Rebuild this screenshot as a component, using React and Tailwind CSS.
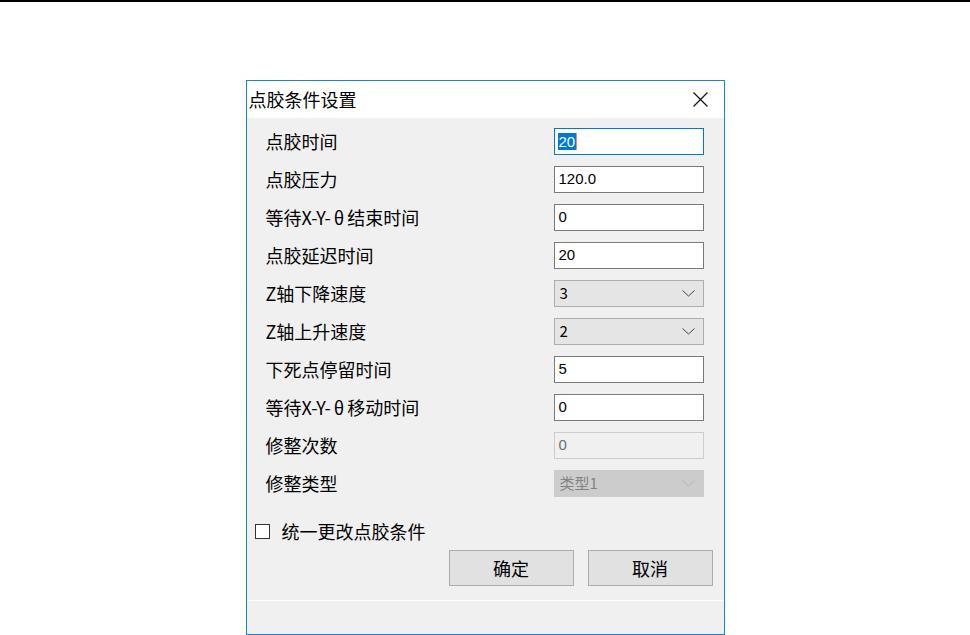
const cjk = { fontFamily: '"Noto Sans CJK SC", "Noto Sans", sans-serif' }

function Chevron({ muted }) {
  return (
    <svg width="13" height="7" viewBox="0 0 13 7" className="shrink-0">
      <polyline
        points="0.5,0.5 6.5,6 12.5,0.5"
        fill="none"
        stroke={muted ? '#b4b4b4' : '#444'}
        strokeWidth="1"
      />
    </svg>
  )
}

function CloseIcon() {
  return (
    <svg width="15" height="15" viewBox="0 0 15 15">
      <path d="M0.5 0.5 L14.5 14.5 M14.5 0.5 L0.5 14.5" stroke="#111" strokeWidth="1.2" fill="none" />
    </svg>
  )
}

function TextField({ value, focused, disabled }) {
  if (disabled) {
    return (
      <div className="h-[27px] w-[150px] border border-[#cccccc] bg-[#f0f0f0] flex items-center px-[4px] text-[15px] text-[#6d6d6d] font-['Liberation_Sans',sans-serif]">
        {value}
      </div>
    )
  }
  return (
    <div
      className={`h-[27px] w-[150px] border bg-white flex items-center px-[3px] text-[15px] text-black font-['Liberation_Sans',sans-serif] ${
        focused ? 'border-[#0078d7]' : 'border-[#7a7a7a]'
      }`}
    >
      {focused ? (
        <>
          <span className="bg-[#0078d7] text-white leading-[17px] px-[1px]">{value}</span>
          <span className="w-[1px] h-[17px] bg-[#ff8a3d]" />
        </>
      ) : (
        <span className="pl-[1px]">{value}</span>
      )}
    </div>
  )
}

function SelectField({ value, disabled }) {
  return (
    <div
      className={`h-[27px] w-[150px] border flex items-center justify-between pl-[5px] pr-[8px] text-[15px] ${
        disabled
          ? 'border-[#cccccc] bg-[#cccccc] text-[#838383]'
          : 'border-[#adadad] bg-[#e5e5e5] text-black'
      }`}
      style={cjk}
    >
      <span>{value}</span>
      <Chevron muted={disabled} />
    </div>
  )
}

const rows = [
  { label: '点胶时间', kind: 'text', value: '20', focused: true },
  { label: '点胶压力', kind: 'text', value: '120.0' },
  { label: 'theta1', kind: 'text', value: '0' },
  { label: '点胶延迟时间', kind: 'text', value: '20' },
  { label: 'Z轴下降速度', kind: 'select', value: '3' },
  { label: 'Z轴上升速度', kind: 'select', value: '2' },
  { label: '下死点停留时间', kind: 'text', value: '5' },
  { label: 'theta2', kind: 'text', value: '0' },
  { label: '修整次数', kind: 'text', value: '0', disabled: true },
  { label: '修整类型', kind: 'select', value: '类型1', disabled: true },
]

function Label({ row }) {
  if (row.label === 'theta1' || row.label === 'theta2') {
    return (
      <span>
        等待X-Y-<span className="mx-[3px]">θ</span>
        {row.label === 'theta1' ? '结束时间' : '移动时间'}
      </span>
    )
  }
  return <span>{row.label}</span>
}

export default function App() {
  return (
    <div className="min-h-[635px] bg-white border-t-2 border-black" style={cjk}>
      {/* dialog window */}
      <div className="mx-auto mt-[78px] w-[479px] border border-[#1883d7] bg-[#f0f0f0] flex flex-col">
        {/* title bar */}
        <div className="h-[37px] bg-white flex items-center justify-between pl-[2px] pr-[16px]">
          <span className="text-[18px] text-black">点胶条件设置</span>
          <CloseIcon />
        </div>

        {/* fields */}
        <div className="pt-[10px] pl-[19px] pr-[20px] flex flex-col gap-[11px]">
          {rows.map((row, i) => (
            <div key={i} className="flex items-center justify-between">
              <span className="text-[18px] text-black">
                <Label row={row} />
              </span>
              {row.kind === 'select' ? (
                <SelectField value={row.value} disabled={row.disabled} />
              ) : (
                <TextField value={row.value} focused={row.focused} disabled={row.disabled} />
              )}
            </div>
          ))}
        </div>

        {/* checkbox */}
        <div className="mt-[24px] h-[20px] pl-[8px] flex items-center gap-[12px]">
          <div className="w-[15px] h-[15px] border border-[#333] bg-white" />
          <span className="text-[18px] text-black">统一更改点胶条件</span>
        </div>

        {/* buttons */}
        <div className="mt-[9px] pr-[11px] flex justify-end gap-[14px]">
          <button className="w-[125px] h-[36px] border border-[#adadad] bg-[#e1e1e1] text-[18px] text-black">
            确定
          </button>
          <button className="w-[125px] h-[36px] border border-[#adadad] bg-[#e1e1e1] text-[18px] text-black">
            取消
          </button>
        </div>

        {/* status strip */}
        <div className="mt-[14px] h-[1px] bg-white" />
        <div className="h-[33px]" />
      </div>
    </div>
  )
}
